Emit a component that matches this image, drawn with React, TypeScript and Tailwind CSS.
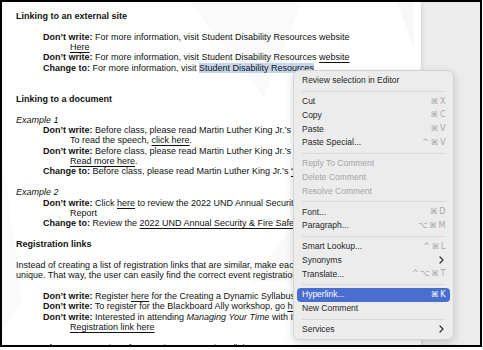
import React from 'react';

const U = ({ children }: { children: React.ReactNode }) => (
  <span className="underline decoration-[0.8px] underline-offset-[1.5px]">{children}</span>
);

const B = ({ children }: { children: React.ReactNode }) => <span className="font-bold">{children}</span>;

function Line({ ind = 0, children }: { ind?: number; children?: React.ReactNode }) {
  const cls =
    ind === 1
      ? 'h-[10.375px] leading-[10.375px] whitespace-nowrap pl-[27px]'
      : ind === 2
      ? 'h-[10.375px] leading-[10.375px] whitespace-nowrap pl-[54px]'
      : 'h-[10.375px] leading-[10.375px] whitespace-nowrap';
  return <div className={cls}>{children}</div>;
}

type Item =
  | { kind: 'sep' }
  | { kind: 'item'; label: string; sc?: string; sub?: boolean; disabled?: boolean; active?: boolean };

const items: Item[] = [
  { kind: 'item', label: 'Review selection in Editor' },
  { kind: 'sep' },
  { kind: 'item', label: 'Cut', sc: '⌘ X' },
  { kind: 'item', label: 'Copy', sc: '⌘ C' },
  { kind: 'item', label: 'Paste', sc: '⌘ V' },
  { kind: 'item', label: 'Paste Special...', sc: '^ ⌘ V' },
  { kind: 'sep' },
  { kind: 'item', label: 'Reply To Comment', disabled: true },
  { kind: 'item', label: 'Delete Comment', disabled: true },
  { kind: 'item', label: 'Resolve Comment', disabled: true },
  { kind: 'sep' },
  { kind: 'item', label: 'Font...', sc: '⌘ D' },
  { kind: 'item', label: 'Paragraph...', sc: '⌥ ⌘ M' },
  { kind: 'sep' },
  { kind: 'item', label: 'Smart Lookup...', sc: '^ ⌘ L' },
  { kind: 'item', label: 'Synonyms', sub: true },
  { kind: 'item', label: 'Translate...', sc: '^ ⌥ ⌘ T' },
  { kind: 'sep' },
  { kind: 'item', label: 'Hyperlink...', sc: '⌘ K', active: true },
  { kind: 'item', label: 'New Comment' },
  { kind: 'sep' },
  { kind: 'item', label: 'Services', sub: true },
];

function Chevron() {
  return (
    <svg width="5" height="8" viewBox="0 0 5 8" className="mr-[1px]">
      <path d="M1 1 L4 4 L1 7" fill="none" stroke="#2a2a2a" strokeWidth="1.2" strokeLinecap="round" strokeLinejoin="round" />
    </svg>
  );
}

function Menu() {
  return (
    <div className="absolute left-[293px] top-[70px] w-[161px] h-[270px] rounded-[6px] bg-[#ececec] border border-[#d3d3d3] shadow-[0_3px_10px_rgba(0,0,0,0.16)] pt-[3px] px-[3px] text-[8.5px] text-[#262626] font-['Liberation_Sans','DejaVu_Sans',sans-serif]">
      {items.map((it, i) =>
        it.kind === 'sep' ? (
          <div key={i} className="h-[7.35px] flex items-center px-[5px]">
            <div className="h-px w-full bg-[#d7d7d7]" />
          </div>
        ) : (
          <div
            key={i}
            className={
              it.active
                ? 'h-[13.65px] px-[5px] rounded-[4px] flex items-center justify-between bg-[#4a6ecf] text-white'
                : it.disabled
                ? 'h-[13.65px] px-[5px] rounded-[4px] flex items-center justify-between text-[#a5a5a5]'
                : 'h-[13.65px] px-[5px] rounded-[4px] flex items-center justify-between'
            }
          >
            <span className="whitespace-nowrap">{it.label}</span>
            {it.sc ? (
              <span
                className={
                  it.active
                    ? "whitespace-nowrap text-[8px] font-['DejaVu_Sans',sans-serif] text-white tracking-[-0.5px]"
                    : "whitespace-nowrap text-[8px] font-['DejaVu_Sans',sans-serif] text-[#a8a8a8] tracking-[-0.5px]"
                }
              >
                {it.sc}
              </span>
            ) : it.sub ? (
              <Chevron />
            ) : null}
          </div>
        )
      )}
    </div>
  );
}

export default function App() {
  return (
    <div className="w-[483px] h-[350px] bg-white relative overflow-hidden font-['Liberation_Sans',Arial,sans-serif]">
      <div className="w-[482px] h-[347px] border-2 border-black flex overflow-hidden">
        <div className="w-[419px] h-full bg-white relative overflow-hidden">
          <svg className="absolute left-0 top-0" width="419" height="345" viewBox="0 0 419 345">
            <polygon points="188,0 300,0 262,95" fill="#fafafa" />
            <polygon points="395,0 412,0 412,48" fill="#f8f8f8" />
            <polygon points="0,150 20,300 0,330" fill="#fafafa" />
            <polygon points="300,210 250,280 300,280" fill="#fafafa" />
          </svg>
          <div className="relative pt-[8.8px] pl-[14px] text-[9px] text-[#111]">
            <Line><B>Linking to an external site</B></Line>
            <Line />
            <Line ind={1}><B>Don’t write:</B> For more information, visit Student Disability Resources website</Line>
            <Line ind={2}><U>Here</U></Line>
            <Line ind={1}><B>Don’t write:</B> For more information, visit Student Disability Resources <U>website</U></Line>
            <Line ind={1}>
              <B>Change to:</B> For more information, visit <span className="bg-[#c7d6ef]">Student Disability Resources</span>.
            </Line>
            <Line />
            <Line />
            <Line><B>Linking to a document</B></Line>
            <Line />
            <Line><i>Example 1</i></Line>
            <Line ind={1}><B>Don’t write:</B> Before class, please read Martin Luther King Jr.’s “I Have a Dream” speech.</Line>
            <Line ind={2}>To read the speech, <U>click here</U>.</Line>
            <Line ind={1}><B>Don’t write:</B> Before class, please read Martin Luther King Jr.’s “I Have a Dream” speech.</Line>
            <Line ind={2}><U>Read more here</U>.</Line>
            <Line ind={1}><B>Change to:</B> Before class, please read Martin Luther King Jr.’s <U>“I Have a Dream” speech</U>.</Line>
            <Line />
            <Line><i>Example 2</i></Line>
            <Line ind={1}><B>Don’t write:</B> Click <U>here</U> to review the 2022 UND Annual Security &amp; Fire Safety</Line>
            <Line ind={2}>Report</Line>
            <Line ind={1}><B>Change to:</B> Review the <U>2022 UND Annual Security &amp; Fire Safety Report</U>.</Line>
            <Line />
            <Line><B>Registration links</B></Line>
            <Line />
            <Line>Instead of creating a list of registration links that are similar, make each registration link</Line>
            <Line>unique. That way, the user can easily find the correct event registration link.</Line>
            <Line />
            <Line ind={1}><B>Don’t write:</B> Register <U>here</U> for the Creating a Dynamic Syllabus workshop.</Line>
            <Line ind={1}><B>Don’t write:</B> To register for the Blackboard Ally workshop, go <U>here</U>.</Line>
            <Line ind={1}><B>Don’t write:</B> Interested in attending <i>Managing Your Time</i> with Intention?</Line>
            <Line ind={2}><U>Registration link here</U></Line>
            <Line />
            <Line ind={1}><B>Change to:</B> Register for <U>Creating a Dynamic Syllabus</U></Line>
          </div>
        </div>
        <div className="flex-1 h-full bg-[#ececec] border-l border-[#dcdcdc] shadow-[inset_2px_0_3px_rgba(0,0,0,0.04)]" />
      </div>
      <Menu />
    </div>
  );
}
